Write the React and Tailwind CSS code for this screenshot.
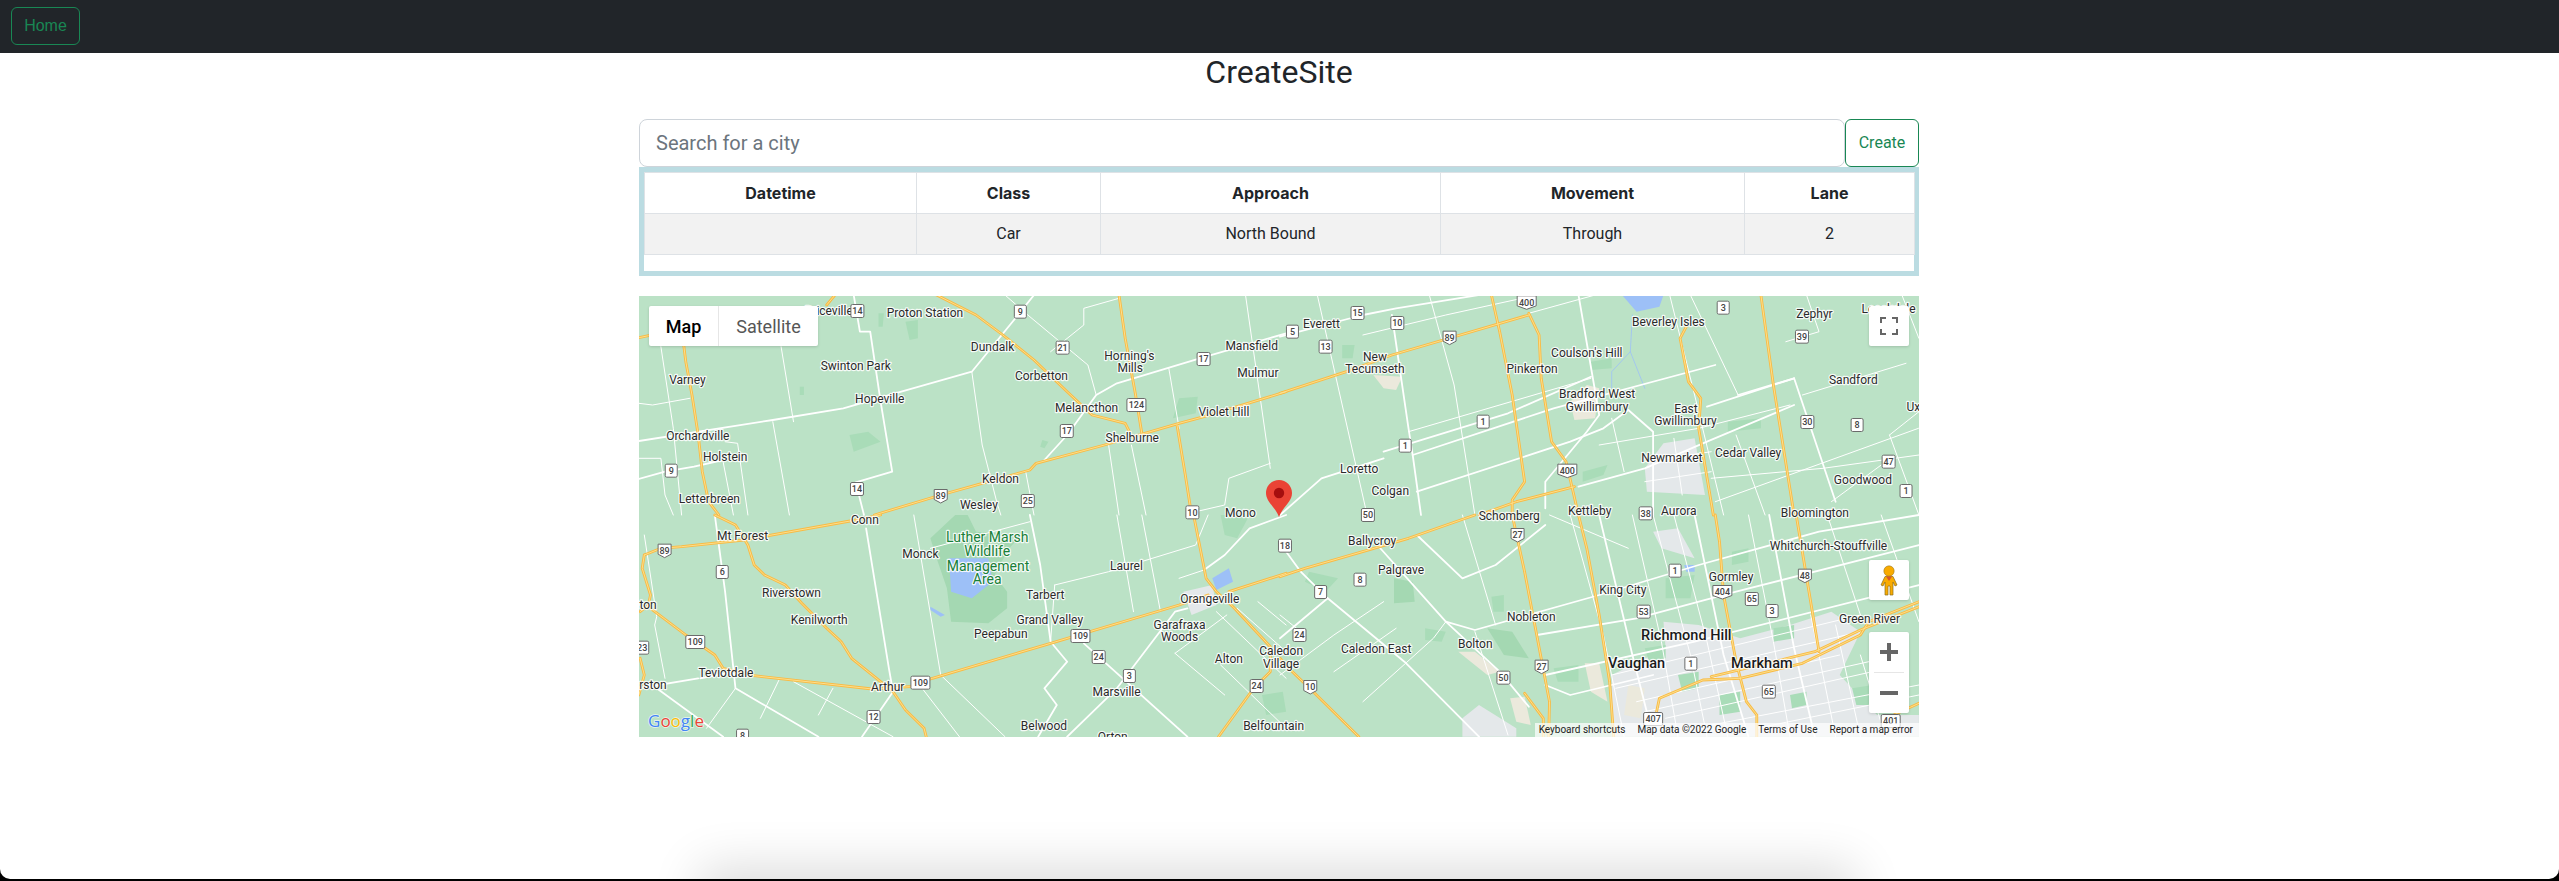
import React from "react";

const S = { A: [636, 295], B: [1280, 295], C: [636, 515], D: [1280, 515] };
const pt = (q, x, y) => [S[q][0] + x / 2.412 - 639, S[q][1] + y / 3 - 296];
const toPts = (q, a) => {
  const r = [];
  for (let i = 0; i < a.length; i += 2) {
    const p = pt(q, a[i], a[i + 1]);
    r.push(p[0].toFixed(1) + "," + p[1].toFixed(1));
  }
  return r.join(" ");
};

const orange = [
  ["A", [725,0,820,60,885,120,960,195,1040,290,1100,360,1180,385,1190,410]],
  ["A", [7,128,30,122]],
  ["A", [115,150,120,200,135,300,150,420,160,530,175,620,200,660]],
  ["A", [480,0,460,30]],
  ["A", [1165,0,1180,130,1205,300,1220,415]],
  ["A", [575,660,735,600,850,560,950,525,965,505,1130,450,1310,385,1370,365,1568,290]],
  ["A", [1305,390,1325,540,1340,660]],
  ["B", [510,0,530,110,560,300,590,560,560,615,560,660]],
  ["B", [600,55,625,120,630,250,655,440,690,500,720,660]],
  ["B", [0,295,160,230,270,180,600,60]],
  ["B", [480,660,570,620,710,575]],
  ["B", [980,95,965,130,985,260,1015,310,1010,400,1045,660]],
  ["B", [1160,0,1190,270,1240,660]],
  ["C", [190,0,240,30,270,90,285,150,310,180,360,210,400,265,460,340,495,380,520,430,590,500,620,530,650,585,695,640,700,665]],
  ["C", [20,120,60,100,110,95,260,75,530,15,590,0]],
  ["C", [20,120,15,160,35,240,30,270,10,290]],
  ["C", [35,280,120,360,190,420,210,460,285,482,570,522,660,515,715,490,1000,385,1310,270,1380,240]],
  ["C", [1430,230,1568,175]],
  ["C", [1345,0,1375,190,1400,230,1440,275,1530,395,1530,470,1490,520,1405,665]],
  ["C", [10,430,20,480,7,540]],
  ["D", [720,0,740,100,770,300,795,500,805,665]],
  ["D", [1050,0,1060,80,1070,240,1100,440,1125,560,1150,600,1150,665]],
  ["D", [560,0,590,170,650,560,648,665]],
  ["D", [470,0,310,70,60,160,0,185]],
  ["D", [1245,0,1300,410]],
  ["D", [905,610,915,550,1020,495,1110,490,1260,445,1400,360,1420,320,1541,260]],
  ["D", [1040,485,1290,410,1400,345,1541,275]],
  ["D", [590,535,635,610,635,665]],
  ["D", [0,430,30,470,80,530,190,665]],
  ["D", [1480,600,1541,565]],
];

const thick = [
  ["A", [960,0,915,70,810,230,640,290,500,340,330,375,7,438]],
  ["A", [525,0,540,110,565,110,590,320,618,530,530,562,550,660]],
  ["A", [7,552,70,530,140,515,210,495]],
  ["A", [985,495,1040,420,1110,300,1160,265,1360,190,1568,115]],
  ["B", [0,125,200,60,280,40,480,0]],
  ["B", [250,470,550,355,750,245]],
  ["B", [320,480,660,340,1050,210]],
  ["B", [330,590,700,440,780,400,840,345]],
  ["B", [840,345,900,410,900,660]],
  ["B", [0,660,100,550,250,490]],
  ["B", [720,575,880,520,1030,440,1240,330]],
  ["B", [1105,300,1240,250]],
  ["B", [1030,335,1240,250]],
  ["B", [1240,250,1340,620]],
  ["B", [270,60,310,400,320,480,340,660]],
  ["B", [720,0,770,360,740,410,700,470,640,560,640,640]],
  ["C", [950,0,975,150,1000,380,1040,440,985,520,1015,570,970,665]],
  ["C", [555,40,610,460,620,530,545,665]],
  ["C", [190,0,215,230,240,520,440,665]],
  ["C", [50,520,210,665]],
  ["C", [1370,165,1420,120,1480,40,1568,0]],
  ["C", [1040,665,1160,520,1300,290,1330,280]],
  ["C", [1080,385,1330,665]],
  ["C", [155,490,240,470]],
  ["C", [7,520,150,490]],
  ["D", [0,85,50,170,115,250,300,440,480,665]],
  ["D", [115,250,0,370]],
  ["D", [235,90,400,320,530,470,600,575]],
  ["D", [330,60,440,190,520,150,640,30]],
  ["D", [400,320,470,345,770,240,1010,150,1300,50,1541,0]],
  ["D", [620,360,860,310,1100,230,1541,90]],
  ["D", [640,480,1000,380,1541,210]],
  ["D", [770,0,850,420,900,665]],
  ["D", [1000,0,1070,420,1130,665]],
  ["D", [1180,0,1240,400,1290,665]],
  ["D", [640,510,700,540,900,480]],
];

const thin = [
  ["A", [890,0,945,60,1090,210,1110,300]],
  ["A", [1165,10,1080,40,1080,90,1000,170]],
  ["A", [810,230,835,450,870,620,880,660]],
  ["A", [1470,0,1530,520]],
  ["A", [1530,505,1430,550,1420,630,1350,650]],
  ["A", [1285,220,1310,400]],
  ["A", [1140,450,1165,660]],
  ["A", [1195,450,1230,660]],
  ["A", [60,155,90,400,110,660]],
  ["A", [350,155,380,380]],
  ["A", [330,380,370,660]],
  ["A", [7,325,40,330,130,310]],
  ["A", [7,490,60,490,70,600,90,660]],
  ["A", [215,440,245,445,270,660]],
  ["A", [210,500,235,660]],
  ["A", [940,530,960,660]],
  ["B", [90,0,210,660]],
  ["B", [360,0,420,270,470,660]],
  ["B", [940,0,1000,300,1070,660]],
  ["B", [990,0,1105,300]],
  ["B", [1260,300,1510,205]],
  ["B", [800,370,830,530]],
  ["B", [1220,140,1300,110,1270,0]],
  ["B", [1470,420,1541,350]],
  ["B", [1470,420,1541,660]],
  ["B", [1330,620,1450,510]],
  ["B", [770,450,1010,400,1230,330]],
  ["B", [200,120,400,60,620,0]],
  ["B", [600,55,760,0]],
  ["B", [310,410,750,250]],
  ["B", [1050,620,1540,400]],
  ["B", [1040,550,1310,520,1541,480]],
  ["B", [1100,420,1170,660]],
  ["B", [1500,0,1541,130]],
  ["B", [880,500,1040,470]],
  ["B", [880,560,1040,530]],
  ["B", [950,430,970,600]],
  ["C", [20,60,50,305,45,330,70,490]],
  ["C", [670,0,735,480,890,665]],
  ["C", [690,520,780,665]],
  ["C", [1010,210,1140,170,1350,90,1380,0]],
  ["C", [1010,210,1000,380]],
  ["C", [1310,190,1370,165]],
  ["C", [1400,290,1568,490]],
  ["C", [1450,280,1568,410]],
  ["C", [1500,260,1568,330]],
  ["C", [1300,415,1425,300]],
  ["C", [1300,415,1420,540]],
  ["C", [1410,450,1568,640]],
  ["C", [170,640,240,520]],
  ["C", [300,610,345,495]],
  ["C", [440,600,475,520]],
  ["C", [380,500,620,665]],
  ["C", [1160,0,1200,290]],
  ["C", [1220,0,1265,290]],
  ["C", [710,100,950,20]],
  ["D", [0,300,60,360]],
  ["D", [440,0,520,330]],
  ["D", [470,350,550,660]],
  ["D", [700,0,780,360,830,665]],
  ["D", [850,0,920,380,960,665]],
  ["D", [900,0,990,420,1030,665]],
  ["D", [950,0,1030,380,1080,665]],
  ["D", [1130,0,1190,380,1230,665]],
  ["D", [1280,300,1340,665]],
  ["D", [1340,330,1400,665]],
  ["D", [1400,420,1460,665]],
  ["D", [800,480,1400,300]],
  ["D", [810,520,1400,350]],
  ["D", [860,560,1350,420]],
  ["D", [880,590,1420,440]],
  ["D", [930,610,1500,450]],
  ["D", [1000,640,1541,510]],
  ["D", [1150,640,1541,540]],
  ["D", [0,480,130,360,250,260]],
  ["D", [130,470,280,340]],
  ["D", [200,560,370,370,400,320]],
  ["D", [650,0,840,100]],
  ["D", [1320,0,1400,300]],
  ["D", [1450,0,1541,320]],
];

const forest = "#a9dcb8";
const gray = "#e4e8ea";
const beige = "#ebe9dc";
const water = "#9dc0f7";
const patches = [
  ["A", [650,80,680,75,680,130,660,135], forest],
  ["A", [1310,310,1355,305,1350,355,1295,370], forest],
  ["A", [585,55,598,55,595,95,585,95], forest],
  ["A", [515,420,560,410,590,440,525,470], forest],
  ["A", [395,275,405,275,405,300,395,300], forest],
  ["A", [980,435,995,440,985,460,975,455], forest],
  ["B", [225,240,295,245,280,285,250,280], beige],
  ["B", [700,320,740,270,770,280,760,370,710,375], beige],
  ["B", [880,520,925,445,1000,430,1025,600,885,590], gray],
  ["B", [825,0,925,0,915,35,860,50], water],
  ["B", [750,200,800,190,800,220,750,225], forest],
  ["B", [150,150,180,150,175,190,150,190], forest],
  ["B", [1080,380,1160,370,1160,400,1080,410], forest],
  ["B", [730,530,790,510,780,540,730,560], forest],
  ["C", [710,70,770,0,800,0,820,50,930,60,900,100,865,180,895,230,895,280,850,325,760,320,750,220,725,130], "#a4d8b2"],
  ["C", [755,130,850,130,860,200,810,250,760,230], water],
  ["C", [710,275,745,300,735,305,710,285], water],
  ["C", [1320,230,1390,210,1400,270,1340,300], gray],
  ["C", [1390,190,1430,160,1440,200,1400,225], water],
  ["C", [1410,0,1480,0,1450,70,1420,60], forest],
  ["C", [1510,540,1560,530,1568,590,1520,600], forest],
  ["D", [925,320,1010,330,1110,370,1230,330,1330,290,1400,350,1350,480,1440,600,1541,600,1541,665,800,665,800,480,930,400], gray],
  ["D", [900,50,960,40,1000,130,920,100], gray],
  ["D", [440,610,480,570,570,640,570,665,440,665], gray],
  ["D", [430,410,470,410,530,470,500,480], beige],
  ["D", [735,445,770,445,790,560,750,530], beige],
  ["D", [840,510,880,520,870,610,830,600], beige],
  ["D", [555,550,590,545,605,630,570,620], beige],
  ["D", [500,340,560,350,600,430,540,420], "#a4d8b2"],
  ["D", [275,190,320,200,325,260,275,265], "#a4d8b2"],
  ["D", [70,170,140,190,110,230,60,200], forest],
  ["D", [510,245,540,240,540,290,515,290], forest],
  ["D", [660,460,720,450,720,500,670,500], forest],
  ["D", [350,340,400,350,390,380,350,375], forest],
  ["D", [930,190,1000,180,990,250,930,250], forest],
  ["D", [975,150,1000,150,1000,170,980,170], water],
  ["D", [1090,110,1130,100,1130,140,1090,150], forest],
  ["D", [960,480,1010,470,1010,520,970,530], forest],
  ["D", [1060,540,1110,530,1110,590,1060,600], forest],
  ["D", [1190,340,1240,330,1240,370,1190,380], forest],
  ["D", [1230,540,1270,530,1270,570,1235,580], forest],
  ["D", [880,400,930,390,930,430,890,440], forest],
  ["D", [1380,520,1430,510,1420,570,1390,570], forest],
];

const rivers = [
  ["B", [850,60,845,170,800,230,800,280]],
  ["B", [845,170,880,280]],
];

const labels = [
  ["A","Proton Station",697,52],["A","Dundalk",860,156],["A","Swinton Park",530,213],["A","Horning's",1190,181],["A","Mills",1192,217],["A","Mansfield",1485,151],["A","Mulmur",1500,234],["A","Corbetton",978,241],["A","Varney",124,253],["A","Hopeville",588,310],["A","Melancthon",1087,339],["A","Violet Hill",1418,351],["A","Orchardville",149,423],["A","Shelburne",1197,427],["A","Holstein",215,484],["A","Keldon",879,552],["A","Wesley",827,630],["A","Letterbreen",177,610],["A","Mono",1458,652],["A","Priceville",465,48],
  ["B","Everett",100,85],["B","New",229,184],["B","Tecumseth",229,220],["B","Pinkerton",608,220],["B","Coulson's Hill",740,172],["B","Beverley Isles",937,79],["B","Zephyr",1289,56],["B","Sandford",1383,255],["B","Bradford West",765,297],["B","Gwillimbury",765,334],["B","East",979,340],["B","Gwillimbury",978,376],["B","Uxbridge",1568,334],["B","Cedar Valley",1129,472],["B","Newmarket",945,487],["B","Loretto",191,520],["B","Colgan",266,586],["B","Goodwood",1406,555],["B","Kettleby",747,648],["B","Aurora",962,646],["B","Bloomington",1290,652],["B","Schomberg",553,662],["B","Leaskdale",1468,42],
  ["C","Conn",552,13],["C","Mt Forest",257,63],["C","Monck",686,117],["C","Laurel",1183,151],["C","Riverstown",375,232],["C","Tarbert",987,240],["C","Orangeville",1384,250],["C","Harriston",-10,268],["C","Kenilworth",442,313],["C","Grand Valley",998,313],["C","Garafraxa",1311,328],["C","Woods",1311,364],["C","Peepabun",880,355],["C","Alton",1430,430],["C","Caledon",1556,408],["C","Village",1556,445],["C","Teviotdale",217,472],["C","Palmerston",0,508],["C","Arthur",607,514],["C","Marsville",1159,529],["C","Belwood",984,631],["C","Belfountain",1538,631],["C","Orton",1150,665],
  ["D","Ballycroy",222,76],["D","Palgrave",292,163],["D","Whitchurch-Stouffville",1323,93],["D","Gormley",1088,184],["D","King City",827,223],["D","Nobleton",606,304],["D","Green River",1422,310],["D","Caledon East",232,400],["D","Bolton",471,387],
];
const greenLabels = [["C","Luther Marsh",847,67],["C","Wildlife",847,109],["C","Management",849,152],["C","Area",847,193]];
const bigLabels = [["D","Richmond Hill",980,360],["D","Vaughan",860,442],["D","Markham",1162,442]];

const shields = [
  ["A","14",534,48],["A","9",927,50],["A","21",1029,158],["A","17",1369,192],["A","124",1207,330],["A","17",1039,408],["A","9",85,527],["A","14",533,582],["A","89",735,603,1],["A","25",945,618],["A","10",1342,652],
  ["B","15",187,54],["B","5",30,110],["B","10",283,84],["B","89",409,128,1],["B","13",110,155],["B","400",595,22,1],["B","3",1069,38],["B","39",1259,125],["B","1",490,380],["B","1",302,452],["B","400",693,527,1],["B","30",1272,381],["B","8",1392,390],["B","47",1468,500],["B","1",1510,588],["B","38",882,655],["B","50",212,660],
  ["C","89",69,107,1],["C","6",208,171],["C","109",143,381],["C","109",1072,363],["C","23",15,398],["C","24",1116,426],["C","3",1190,483],["C","109",686,503],["C","24",1497,513],["C","12",573,606],["C","8",257,662],
  ["D","18",12,92],["D","27",573,60,1],["D","8",193,194],["D","7",98,231],["D","1",953,167],["D","48",1266,182,1],["D","404",1067,231,1],["D","65",1138,252],["D","3",1187,288],["D","53",877,290],["D","24",47,360],["D","1",991,446],["D","27",631,455,1],["D","50",539,488],["D","10",73,516,1],["D","65",1179,530],["D","407",900,612],["D","401",1473,618],
];

function MapDrawing() {
  const line = (list, stroke, w, prefix) =>
    list.map((r, i) => (
      <polyline key={prefix + i} points={toPts(r[0], r[1])} fill="none" stroke={stroke} strokeWidth={w} strokeLinejoin="round" strokeLinecap="round" />
    ));
  const text = (list, size, weight, fill, prefix) =>
    list.map((l, i) => {
      const p = pt(l[0], l[2], l[3]);
      return (
        <text key={prefix + i} x={p[0]} y={p[1] + size * 0.36} textAnchor="middle" fontSize={size} fontWeight={weight} fill={fill} stroke="#ffffff" strokeOpacity="0.85" strokeWidth="2.4" strokeLinejoin="round" style={{ paintOrder: "stroke" }}>
          {l[1]}
        </text>
      );
    });
  return (
    <svg width="1280" height="441" viewBox="0 0 1280 441" className="block font-['Roboto',sans-serif]">
      <rect width="1280" height="441" fill="#bbe2c6" />
      {patches.map((r, i) => (
        <polygon key={"p" + i} points={toPts(r[0], r[1])} fill={r[2]} />
      ))}
      {line(rivers, "#9dc0f7", 0.8, "r")}
      {line(thin, "#ffffff", 1, "t")}
      {line(thick, "#ffffff", 1.8, "k")}
      {line(orange, "#f8bb45", 2.8, "o")}
      {line(orange, "#fde293", 0.9, "i")}
      {text(labels, 12, 400, "#2b2b2b", "l")}
      {text(greenLabels, 14, 400, "#188038", "g")}
      {text(bigLabels, 14.5, 500, "#1a1a1a", "b")}
      {shields.map((s, i) => {
        const p = pt(s[0], s[2], s[3]);
        const w = s[1].length > 2 ? 19 : s[1].length > 1 ? 13 : 12;
        const d = s[4]
          ? `M${p[0] - w / 2} ${p[1] - 6.5}h${w}v10l${-w / 2} 3.5l${-w / 2} -3.5z`
          : `M${p[0] - w / 2 + 1.5} ${p[1] - 6.5}h${w - 3}q1.5 0 1.5 1.5v10q0 1.5 -1.5 1.5h${-(w - 3)}q-1.5 0 -1.5 -1.5v-10q0 -1.5 1.5 -1.5z`;
        return (
          <g key={"s" + i}>
            <path d={d} fill="#ffffff" stroke="#6b6b6b" strokeWidth="1" />
            <text x={p[0]} y={p[1] + 3.2} textAnchor="middle" fontSize="9" fontWeight="500" fill="#444444">
              {s[1]}
            </text>
          </g>
        );
      })}
      <g transform="translate(627 184)">
        <path d="M13 0C5.8 0 0 5.8 0 13C0 22 9.5 27 13 37C16.5 27 26 22 26 13C26 5.8 20.2 0 13 0Z" fill="#ea4335" />
        <circle cx="13" cy="13" r="5.2" fill="#a50e0e" />
      </g>
      <text x="9" y="431" fontSize="17" fontWeight="500" stroke="#ffffff" strokeOpacity="0.7" strokeWidth="1.5" style={{ paintOrder: "stroke", fontFamily: "'Open Sans',sans-serif" }}>
        <tspan fill="#4285f4">G</tspan>
        <tspan fill="#ea4335">o</tspan>
        <tspan fill="#fbbc04">o</tspan>
        <tspan fill="#4285f4">g</tspan>
        <tspan fill="#34a853">l</tspan>
        <tspan fill="#ea4335">e</tspan>
      </text>
    </svg>
  );
}

const ctl = "absolute bg-white rounded-[2px] shadow-[0_1px_3px_rgba(0,0,0,0.15)]";

function GoogleMap() {
  return (
    <div className="relative w-[1280px] h-[441px] mt-[20px] overflow-hidden font-['Roboto',sans-serif]">
      <MapDrawing />
      <div className={ctl + " left-[10px] top-[10px] flex h-[40px] text-[18px]"}>
        <div className="w-[70px] flex items-center justify-center font-medium text-black border-r border-[#e6e6e6]">Map</div>
        <div className="w-[99px] flex items-center justify-center text-[#565656]">Satellite</div>
      </div>
      <div className={ctl + " right-[10px] top-[10px] w-[40px] h-[40px] flex items-center justify-center"}>
        <svg width="18" height="18" viewBox="0 0 18 18" fill="none" stroke="#666666" strokeWidth="2">
          <path d="M1 6V1H6M12 1H17V6M17 12V17H12M6 17H1V12" />
        </svg>
      </div>
      <div className={ctl + " right-[10px] top-[264px] w-[40px] h-[40px] flex items-center justify-center"}>
        <svg width="18" height="31" viewBox="0 0 18 31">
          <path d="M5 11.5H13L17 20L15 21L13 17V30H10V21H8V30H5V17L3 21L1 20Z" fill="#f9ab00" stroke="#8a6d1c" strokeWidth="0.7" />
          <circle cx="9" cy="6" r="5.2" fill="#f9ab00" stroke="#8a6d1c" strokeWidth="0.5" />
          <path d="M6 11.5H12L9 16Z" fill="#d9572b" />
        </svg>
      </div>
      <div className={ctl + " right-[10px] top-[336px] w-[40px] h-[81px] flex flex-col items-center"}>
        <div className="h-[40px] flex items-center justify-center">
          <svg width="18" height="18" viewBox="0 0 18 18">
            <path d="M7 0H11V7H18V11H11V18H7V11H0V7H7Z" fill="#666666" />
          </svg>
        </div>
        <div className="w-[30px] h-px bg-[#e6e6e6]" />
        <div className="h-[40px] flex items-center justify-center">
          <svg width="18" height="18" viewBox="0 0 18 18">
            <path d="M0 7H18V11H0Z" fill="#666666" />
          </svg>
        </div>
      </div>
      <div className="absolute right-0 bottom-0 w-[384px] h-[14px] bg-white/70 flex items-center justify-end gap-[12px] pr-[6px] text-[10px] leading-[14px] text-[#222222] whitespace-nowrap">
        <span>Keyboard shortcuts</span>
        <span>Map data ©2022 Google</span>
        <span>Terms of Use</span>
        <span>Report a map error</span>
      </div>
    </div>
  );
}

const cols = [
  ["Datetime", "w-[272px]", ""],
  ["Class", "w-[184px]", "Car"],
  ["Approach", "w-[340px]", "North Bound"],
  ["Movement", "w-[304px]", "Through"],
  ["Lane", "w-[170px]", "2"],
];

export default function App() {
  return (
    <div className="relative h-[881px] overflow-hidden bg-black font-['Roboto',sans-serif] text-[#212529]">
      <div className="relative h-[879px] overflow-hidden rounded-b-[10px] bg-white">
        <nav className="h-[53px] bg-[#212529] pl-[11px] pt-[7px]">
          <button className="h-[38px] w-[69px] rounded-[6px] border border-[#198754] text-[16px] text-[#198754] font-['Liberation_Sans',sans-serif]">
            Home
          </button>
        </nav>
        <main className="ml-[639px] w-[1280px]">
          <h2 className="text-center text-[32px] leading-[38px] font-normal">CreateSite</h2>
          <div className="mt-[28px] flex h-[48px]">
            <input
              placeholder="Search for a city"
              className="min-w-0 flex-1 rounded-[8px] border border-[#ced4da] bg-white px-[16px] text-[20px] outline-none placeholder:text-[#6c757d]"
            />
            <button className="w-[74px] rounded-[6px] border border-[#198754] text-[16px] text-[#198754]">Create</button>
          </div>
          <div className="border-[5px] border-[#bbdce2] pb-[16px]">
            <table className="w-[1270px] table-fixed border-collapse text-center text-[16px]">
              <thead>
                <tr className="h-[41px]">
                  {cols.map((c) => (
                    <th key={c[0]} className={c[1] + " border border-[#dee2e6] font-bold font-['Inter',sans-serif]"}>
                      {c[0]}
                    </th>
                  ))}
                </tr>
              </thead>
              <tbody>
                <tr className="h-[41px] bg-[#f2f2f2]">
                  {cols.map((c) => (
                    <td key={c[0]} className="border border-[#dee2e6]">
                      {c[2]}
                    </td>
                  ))}
                </tr>
              </tbody>
            </table>
          </div>
          <GoogleMap />
        </main>
        <div className="absolute left-[700px] top-[900px] h-[100px] w-[1155px] shadow-[0_-33px_50px_rgba(0,0,0,0.14)]" />
      </div>
    </div>
  );
}
